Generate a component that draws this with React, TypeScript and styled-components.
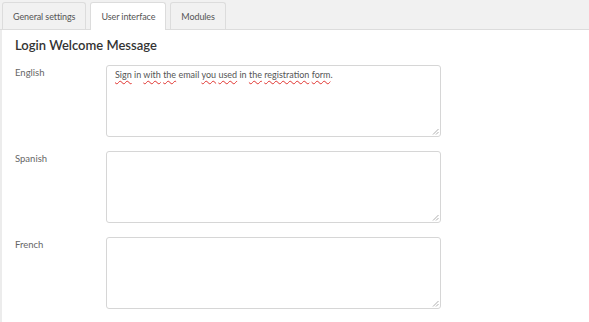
import * as React from 'react'
import styled, { createGlobalStyle } from 'styled-components'

const GlobalStyle = createGlobalStyle`
  html, body {
    margin: 0;
    padding: 0;
    background: #fff;
    font-family: Lato, 'Open Sans', sans-serif;
  }
`

const Page = styled.div`
  width: 589px;
  height: 322px;
  overflow: hidden;
  display: flex;
  flex-direction: column;
`

const TabBar = styled.div`
  display: flex;
  align-items: flex-end;
  gap: 4px;
  height: 29px;
  padding-left: 2px;
  background: #f1f1f1;
  border-bottom: 1px solid #dcdcdc;
`

const Tab = styled.div<{ $active?: boolean }>`
  box-sizing: border-box;
  padding: 0 10px;
  display: flex;
  align-items: center;
  font-size: 9px;
  letter-spacing: -0.1px;
  color: #555;
  background: ${p => (p.$active ? '#fff' : '#f1f1f1')};
  border: 1px solid #dcdcdc;
  border-bottom: none;
  border-radius: 3px 3px 0 0;
  margin-bottom: ${p => (p.$active ? '-1px' : '0')};
  height: ${p => (p.$active ? '28px' : '27px')};
`

const Panel = styled.div`
  flex: 1;
  border-left: 2px solid #ececec;
  padding: 7px 0 0 13px;
`

const Heading = styled.h2`
  margin: 0 0 12px;
  font-size: 13px;
  font-weight: 600;
  color: #333;
`

const Rows = styled.div`
  display: flex;
  flex-direction: column;
  gap: 14px;
`

const Row = styled.div`
  display: flex;
  align-items: flex-start;
`

const Label = styled.div`
  width: 91px;
  padding-top: 2px;
  font-size: 9.5px;
  color: #666;
`

const TextBox = styled.div`
  position: relative;
  width: 335px;
  height: 72px;
  box-sizing: border-box;
  border: 1px solid #d6d6d6;
  border-radius: 3px;
  padding: 3px 8px;
  font-size: 9px;
  line-height: 12px;
  color: #555;
  background: #fff;
`

const Misspelled = styled.span`
  text-decoration: underline wavy #e0332f;
  text-decoration-thickness: 1px;
  text-underline-offset: 2px;
`

const Grip = styled.svg`
  position: absolute;
  right: 1px;
  bottom: 1px;
`

const ResizeGrip = () => (
  <Grip width="7" height="7" viewBox="0 0 7 7">
    <path d="M6.5 1 L1 6.5 M6.5 4 L4 6.5" stroke="#9a9a9a" strokeWidth="0.8" />
  </Grip>
)

const welcome: [string, boolean][] = [
  ['Sign', true],
  [' in ', false],
  ['with', true],
  [' ', false],
  ['the', true],
  [' email ', false],
  ['you', true],
  [' ', false],
  ['used', true],
  [' in ', false],
  ['the', true],
  [' ', false],
  ['registration', true],
  [' ', false],
  ['form', true],
  ['.', false],
]

const languages = ['English', 'Spanish', 'French']

export default function App() {
  return (
    <Page>
      <GlobalStyle />
      <TabBar>
        <Tab>General settings</Tab>
        <Tab $active>User interface</Tab>
        <Tab>Modules</Tab>
      </TabBar>
      <Panel>
        <Heading>Login Welcome Message</Heading>
        <Rows>
          {languages.map(lang => (
            <Row key={lang}>
              <Label>{lang}</Label>
              <TextBox role="textbox">
                {lang === 'English' &&
                  welcome.map(([w, bad], i) =>
                    bad ? <Misspelled key={i}>{w}</Misspelled> : <React.Fragment key={i}>{w}</React.Fragment>
                  )}
                <ResizeGrip />
              </TextBox>
            </Row>
          ))}
        </Rows>
      </Panel>
    </Page>
  )
}
